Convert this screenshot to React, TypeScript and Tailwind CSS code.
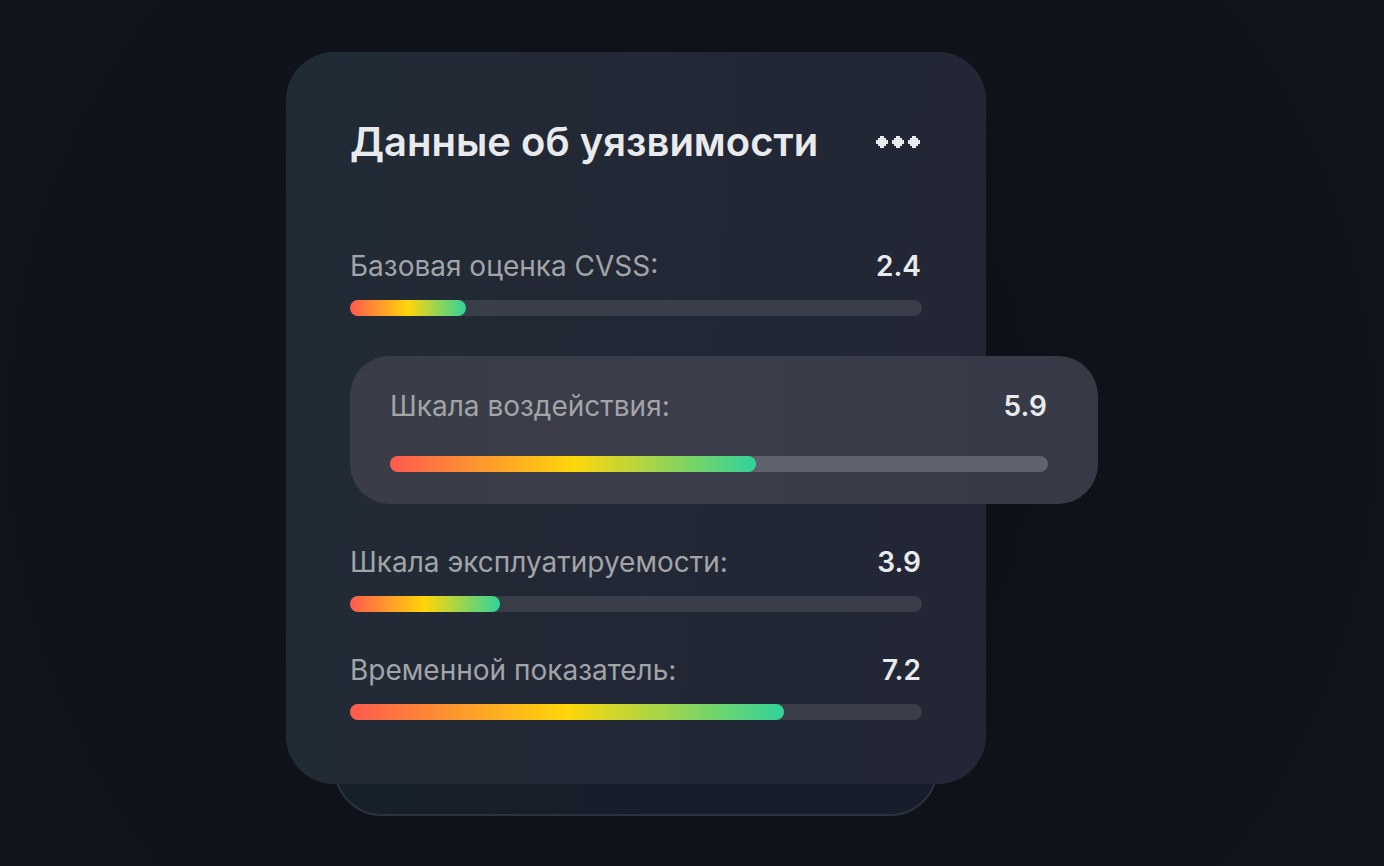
interface Metric {
  id: string
  label: string
  value: string
  fill: number
  highlighted?: boolean
}

const metrics: Metric[] = [
  { id: 'base', label: 'Базовая оценка CVSS:', value: '2.4', fill: 116 / 572 },
  { id: 'impact', label: 'Шкала воздействия:', value: '5.9', fill: 366 / 658, highlighted: true },
  { id: 'exploitability', label: 'Шкала эксплуатируемости:', value: '3.9', fill: 150 / 572 },
  { id: 'temporal', label: 'Временной показатель:', value: '7.2', fill: 434 / 572 }
]

function DotsIcon() {
  return (
    <svg width="44" height="12" viewBox="0 0 44 12" fill="currentColor" shapeRendering="crispEdges" aria-hidden="true">
      {[0, 16, 32].map((x) => (
        <path key={x} d={`M${x + 4} 0h4v2h2v2h2v4h-2v2h-2v2h-4v-2h-2v-2h-2v-4h2v-2h2z`} />
      ))}
    </svg>
  )
}

function MetricRow({ metric }: { metric: Metric }) {
  const { id, label, value, fill, highlighted } = metric

  return (
    <div
      className={
        highlighted
          ? 'relative -mr-44 flex flex-col gap-8 rounded-[40px] bg-linear-to-r from-[#3a3c48] via-[#3b3e4a] to-[#363a46] py-8 pl-10 pr-[50px]'
          : 'flex flex-col gap-4'
      }
    >
      <div className="flex items-center justify-between text-[28px] leading-9">
        <span id={id} className="text-[#a2a4a8]">{label}</span>
        <span className="pr-px font-semibold text-[#e9eaec]">{value}</span>
      </div>
      <div
        role="meter"
        aria-labelledby={id}
        aria-valuenow={Number(value)}
        aria-valuemin={0}
        aria-valuemax={10}
        className={highlighted ? 'h-4 rounded-full bg-[#60636d]' : 'h-4 rounded-full bg-[#3a3e49]'}
      >
        <div
          className="h-full rounded-full bg-[linear-gradient(90deg,#ff5a4f,#ffd60a_50%,#30d39b)]"
          style={{ width: `${fill * 100}%` }}
        />
      </div>
    </div>
  )
}

export default function App() {
  return (
    <main className="flex min-h-screen justify-center bg-[radial-gradient(circle_at_center,#0b0e15_0%,#0f1219_50%,#12141e_100%)] pt-[52px] pb-[50px] font-['Inter',sans-serif]">
      <div className="w-full max-w-[812px] pr-28">
        <div className="relative isolate">
          {/* Second card peeking out from below */}
          <div className="absolute inset-x-12 -bottom-8 -z-10 h-40 rounded-[48px] border-2 border-[#2c323e] bg-linear-to-r from-[#16202a] via-[#171e2b] to-[#171d2b]" />

          <section className="rounded-[48px] bg-[linear-gradient(95deg,#202b35_0%,#222935_35%,#222735_65%,#232735_100%)] p-16">
            <header className="mb-20 flex items-center justify-between">
              <h1 className="text-[40px] font-semibold leading-[52px] text-[#e9eaec]">Данные об уязвимости</h1>
              <button type="button" aria-label="Меню" className="pr-0.5 text-[#e9eaec]">
                <DotsIcon />
              </button>
            </header>
            <div className="flex flex-col gap-10">
              {metrics.map((metric) => (
                <MetricRow key={metric.id} metric={metric} />
              ))}
            </div>
          </section>
        </div>
      </div>
    </main>
  )
}
